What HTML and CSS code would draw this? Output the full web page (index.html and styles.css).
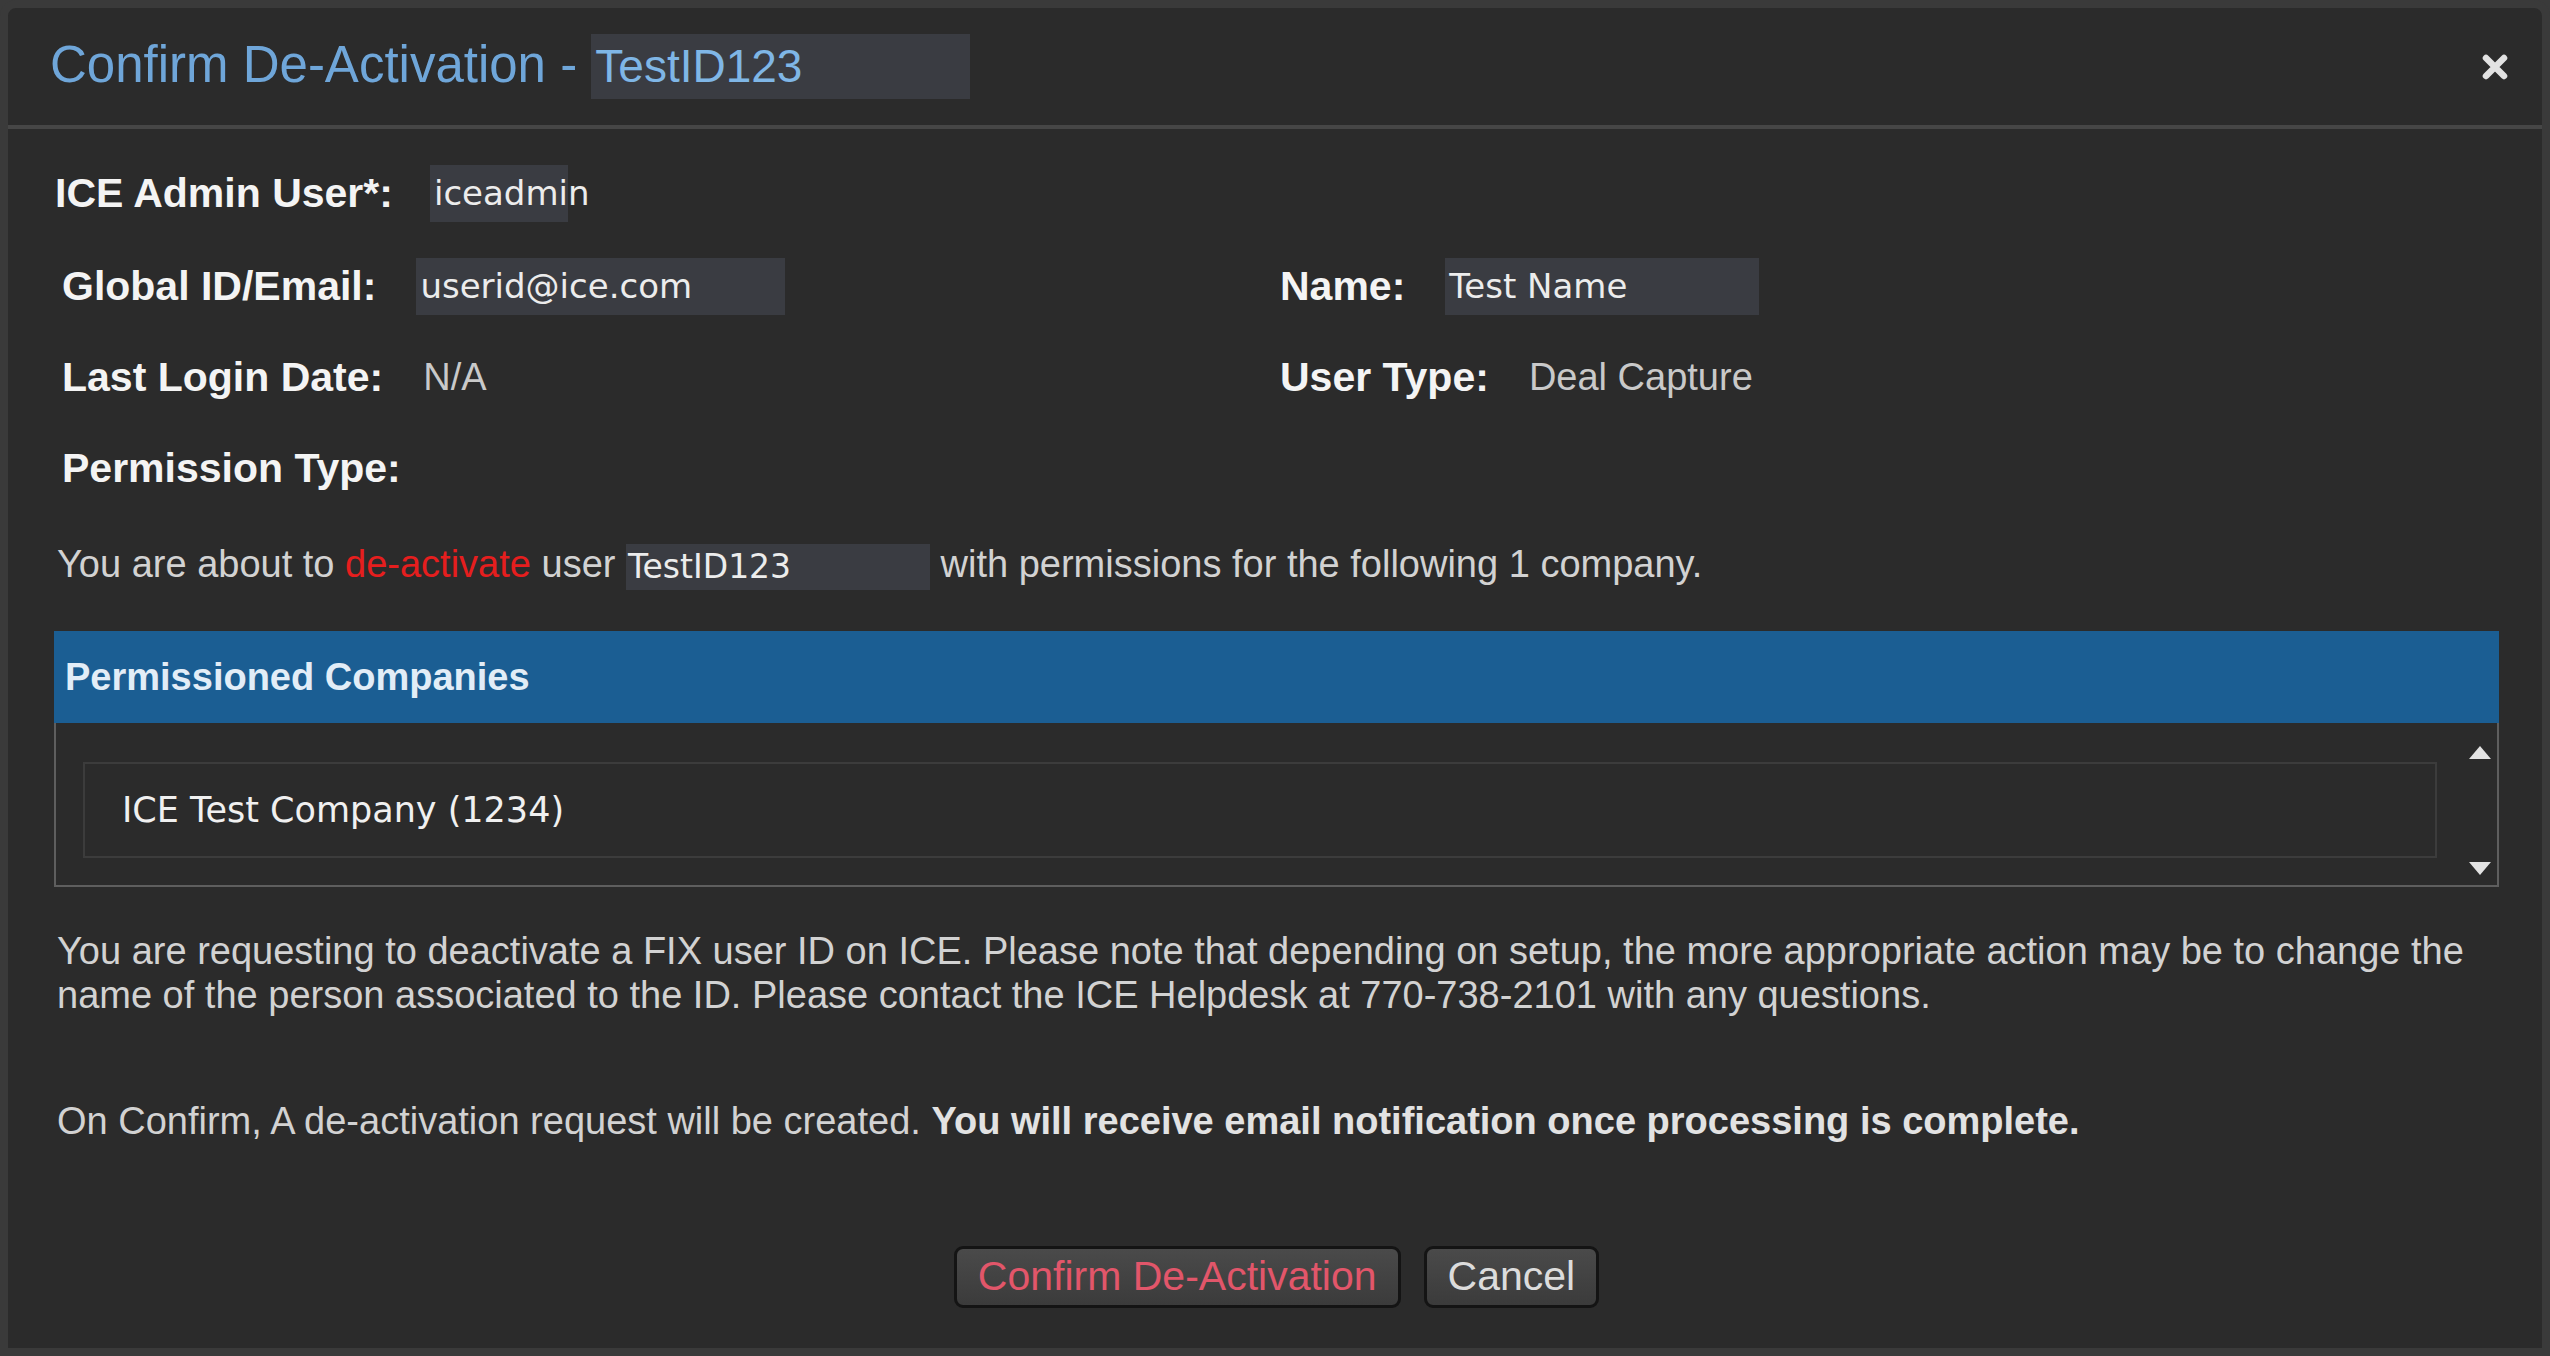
FILE: index.html
```html
<!DOCTYPE html>
<html lang="en">
<head>
  <meta charset="UTF-8">
  <title>Confirm De-Activation</title>
  <link rel="stylesheet" href="styles.css">
</head>
<body>
  <div class="dialog">
    <div class="dialog-head">
      <h1>Confirm De-Activation - <span class="mask mask-title">TestID123</span></h1>
      <button class="close" aria-label="Close">
        <svg width="28" height="28" viewBox="0 0 28 28"><path d="M5 5L23 23M23 5L5 23" stroke="#e2e2e2" stroke-width="6.5" stroke-linecap="round"/></svg>
      </button>
    </div>

    <div class="dialog-body">
      <div class="field field-admin">
        <span class="label">ICE Admin User*:</span>
        <span class="mask mask-admin">iceadmin</span>
      </div>

      <div class="fields">
        <div class="field">
          <span class="label">Global ID/Email:</span>
          <span class="mask mask-email">userid@ice.com</span>
        </div>
        <div class="field">
          <span class="label">Name:</span>
          <span class="mask mask-name">Test Name</span>
        </div>
        <div class="field">
          <span class="label">Last Login Date:</span>
          <span class="value">N/A</span>
        </div>
        <div class="field">
          <span class="label">User Type:</span>
          <span class="value">Deal Capture</span>
        </div>
        <div class="field">
          <span class="label">Permission Type:</span>
        </div>
      </div>

      <p class="notice">You are about to <span class="danger">de-activate</span> user <span class="mask mask-user">TestID123</span> with permissions for the following 1 company.</p>

      <div class="companies">
        <div class="companies-head">Permissioned Companies</div>
        <div class="companies-list">
          <div class="company">ICE Test Company (1234)</div>
          <div class="scrollbar">
            <span class="arrow arrow-up"></span>
            <span class="arrow arrow-down"></span>
          </div>
        </div>
      </div>

      <p class="info">You are requesting to deactivate a FIX user ID on ICE. Please note that depending on setup, the more appropriate action may be to change the name of the person associated to the ID. Please contact the ICE Helpdesk at 770-738-2101 with any questions.</p>

      <p class="info info-confirm">On Confirm, A de-activation request will be created. <strong>You will receive email notification once processing is complete.</strong></p>

      <div class="actions">
        <button class="btn btn-confirm">Confirm De-Activation</button>
        <button class="btn">Cancel</button>
      </div>
    </div>
  </div>
</body>
</html>
```

FILE: styles.css
```css
body {
  margin: 0;
  background: #3a3a3a;
  font-family: 'Liberation Sans', Arial, sans-serif;
  color: #d2d2d2;
}

.dialog {
  box-sizing: border-box;
  height: 100vh;
  background: #2b2b2b;
  border: 8px solid #3a3a3a;
  border-radius: 16px 16px 0 0;
}

.dialog-head {
  display: flex;
  align-items: center;
  justify-content: space-between;
  height: 117px;
  padding: 0 33px 0 42px;
  border-bottom: 4px solid #464646;
}

.dialog-head h1 {
  margin: 0;
  font-size: 51px;
  font-weight: normal;
  color: #6fa6d9;
}

.close {
  background: none;
  border: none;
  padding: 0;
  cursor: pointer;
  display: flex;
}

.dialog-body {
  padding: 36px 43px 0 46px;
}

.mask {
  display: inline-block;
  box-sizing: border-box;
  height: 57px;
  line-height: 57px;
  padding: 0 4px;
  background: #3a3c42;
  font-family: 'DejaVu Sans', sans-serif;
  font-size: 34px;
  color: #ececec;
  vertical-align: middle;
}

.mask-title {
  width: 379px;
  height: 65px;
  line-height: 65px;
  font-family: 'Liberation Sans', Arial, sans-serif;
  font-size: 46px;
  color: #7fb6e6;
  vertical-align: baseline;
}

.mask-admin { width: 138px; }
.mask-email { width: 369px; }
.mask-name { width: 314px; }

.mask-user {
  width: 304px;
  height: 46px;
  line-height: 46px;
  padding: 0 2px;
  font-size: 33px;
}

.field {
  display: flex;
  align-items: center;
  gap: 40px;
  height: 57px;
}

.field-admin {
  padding-left: 1px;
  gap: 37px;
}

.fields {
  display: grid;
  grid-template-columns: 1218px 1fr;
  row-gap: 34px;
  margin-top: 36px;
  padding-left: 8px;
}

.label {
  font-size: 41px;
  font-weight: bold;
  color: #f4f4f4;
}

.value {
  font-size: 38px;
  color: #c9c9c9;
}

.notice {
  margin: 44px 0 0;
  padding-left: 3px;
  font-size: 38px;
  line-height: 46px;
}

.danger {
  color: #e61e1e;
}

.companies {
  margin-top: 41px;
}

.companies-head {
  height: 92px;
  line-height: 92px;
  padding-left: 11px;
  background: #1b5e93;
  color: #e2edf7;
  font-size: 38px;
  font-weight: bold;
}

.companies-list {
  display: flex;
  border: 2px solid #5e5e5e;
  border-top: none;
  padding-left: 27px;
}

.company {
  flex: 1;
  box-sizing: border-box;
  height: 96px;
  margin: 39px 0 27px;
  padding-left: 37px;
  border: 2px solid #3c3c3c;
  line-height: 92px;
  font-family: 'DejaVu Sans', sans-serif;
  font-size: 35px;
  color: #f0f0f0;
}

.scrollbar {
  width: 60px;
  display: flex;
  flex-direction: column;
  justify-content: space-between;
  align-items: center;
  padding: 23px 0 10px 26px;
  box-sizing: border-box;
}

.arrow {
  width: 0;
  height: 0;
  border-left: 11px solid transparent;
  border-right: 11px solid transparent;
}

.arrow-up {
  border-bottom: 13px solid #e2e2e2;
}

.arrow-down {
  border-top: 13px solid #e2e2e2;
}

.info {
  margin: 42px 0 0;
  padding-left: 3px;
  font-size: 38px;
  line-height: 44px;
}

.info-confirm {
  margin-top: 82px;
}

.info strong {
  color: #e2e2e2;
}

.actions {
  display: flex;
  justify-content: center;
  gap: 23px;
  margin-top: 103px;
}

.btn {
  height: 62px;
  padding: 0 21px;
  background: linear-gradient(#4a4a4a, #3b3b3b);
  border: 3px solid #141414;
  border-radius: 9px;
  font-family: 'Liberation Sans', Arial, sans-serif;
  font-size: 41px;
  color: #dcdcdc;
  cursor: pointer;
}

.btn-confirm {
  color: #e2566a;
}
```
